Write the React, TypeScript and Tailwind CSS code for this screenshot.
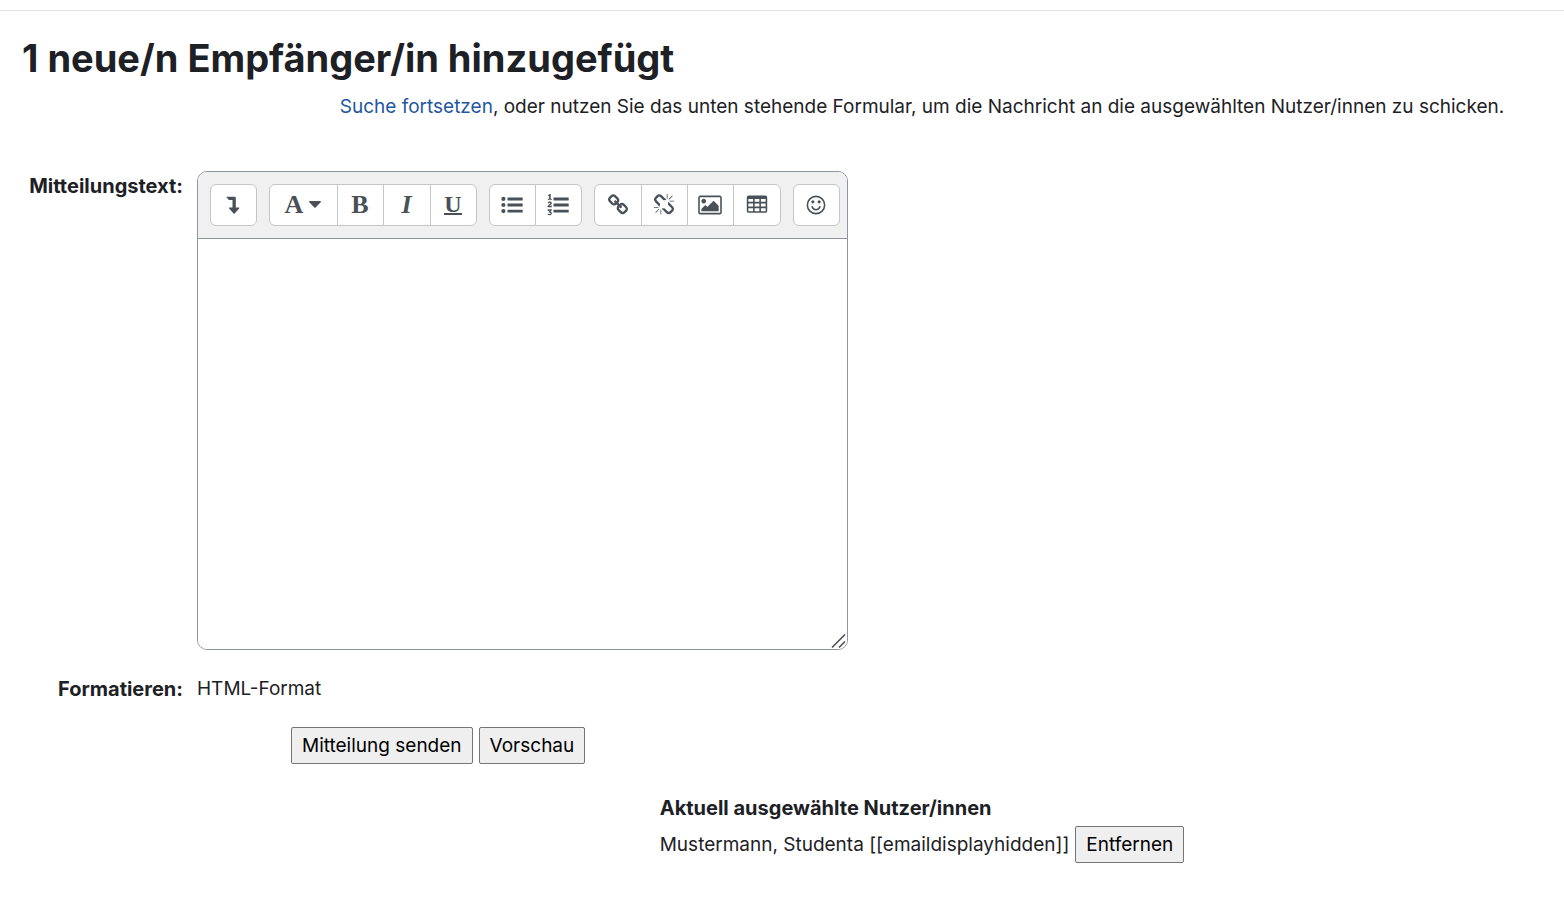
import React, { useState } from 'react';

const LevelDownIcon = () => <svg viewBox="0 0 22 22" className="h-[22px] w-[22px] fill-current" aria-hidden="true">
    <path d="M4.500 3.3c-.2-.3 0-.6.3-.6h8.100c.5 0 .9.4.9.9v9.900h2.900c.6 0 .8.5.5.9l-4.600 5c-.3.300-.7.300-1 0l-4.500-5c-.3-.4-.1-.9.5-.9h2.900V6H7.100a.6.6 0 0 1-.4-.2z" />
  </svg>;

const CaretIcon = () => <svg viewBox="0 0 12 7" className="h-[7px] w-3 fill-current" aria-hidden="true">
    <path d="M.8 0h10.400c.7 0 1 .8.5 1.300L6.600 6.600a.9.9 0 0 1-1.200 0L.3 1.300C-.2.8.1 0 .8 0z" />
  </svg>;

const ListIcon = () => <svg viewBox="0 0 22 22" className="h-[22px] w-[22px] fill-current" aria-hidden="true">
    <circle cx="2.4" cy="4.900" r="2.100" />
    <circle cx="2.4" cy="11" r="2.100" />
    <circle cx="2.4" cy="17.100" r="2.100" />
    <rect x="6.500" y="3.500" width="15.200" height="2.900" rx=".3" />
    <rect x="6.500" y="9.600" width="15.200" height="2.900" rx=".3" />
    <rect x="6.500" y="15.700" width="15.200" height="2.900" rx=".3" />
  </svg>;

const OrderedListIcon = () => <svg viewBox="0 0 22 22" className="h-[22px] w-[22px] overflow-visible fill-current" aria-hidden="true">
    <path d="M.8 1.200 2.700-.1h1v4.800h1.200v1H.8v-1h1.300V1.600l-.8.600z" />
    <path d="M.6 9.100C.9 8 1.700 7.500 2.800 7.500c1.200 0 2 .7 2 1.700 0 1.500-2.100 2-2.400 2.900h1.300v-.6h1.100v1.700H.6c-.4-2.600 2.700-2.900 2.700-4 0-.800-1.300-.7-1.600.4z" />
    <path d="M.8 15.200h4v1l-1.300 1.400c.8.200 1.300.8 1.300 1.600 0 1.300-1 2.100-2.300 2.100-.8 0-1.500-.3-2-.7l.6-1c.9.800 2.400.8 2.400-.300 0-.7-.6-.9-1.700-.8l-.3-.6 1.300-1.500H1.900v.5H.8z" />
    <rect x="6.500" y="3.500" width="15.200" height="2.900" rx=".3" />
    <rect x="6.500" y="9.600" width="15.200" height="2.900" rx=".3" />
    <rect x="6.500" y="15.700" width="15.200" height="2.900" rx=".3" />
  </svg>;

const LinkIcon = () => <svg viewBox="0 0 1792 1792" className="h-[22px] w-[22px] fill-current" aria-hidden="true">
    <path d="M1520 1216q0-40-28-68l-208-208q-28-28-68-28-42 0-72 32 3 3 19 18.500t21.500 21.500 15 19 13 25.500 3.500 27.500q0 40-28 68t-68 28q-15 0-27.500-3.500t-25.500-13-19-15-21.500-21.500-18.500-19q-33 31-33 73 0 40 28 68l206 207q27 27 68 27 40 0 68-26l147-146q28-28 28-67zm-703-705q0-40-28-68l-206-207q-28-28-68-28-39 0-68 27l-147 146q-28 28-28 67 0 40 28 68l208 208q27 27 68 27 42 0 72-31-3-3-19-18.500t-21.500-21.500-15-19-13-25.500-3.500-27.500q0-40 28-68t68-28q15 0 27.500 3.500t25.500 13 19 15 21.500 21.500 18.500 19q33-31 33-73zm895 705q0 120-85 203l-147 146q-83 83-203 83-121 0-204-85l-206-207q-83-83-83-203 0-123 88-209l-88-88q-86 88-208 88-120 0-204-84l-208-208q-84-84-84-204t85-203l147-146q83-83 203-83 121 0 204 85l206 207q83 83 83 203 0 123-88 209l88 88q86-88 208-88 120 0 204 84l208 208q84 84 84 204z" />
  </svg>;

const UnlinkIcon = () => <svg viewBox="0 0 1792 1792" className="h-[22px] w-[22px] fill-current" aria-hidden="true">
    <path d="M503 1271l-256 256q-10 9-23 9-12 0-23-9-9-10-9-23t9-23l256-256q10-9 23-9t23 9q9 10 9 23t-9 23zm169 41v320q0 14-9 23t-23 9-23-9-9-23v-320q0-14 9-23t23-9 23 9 9 23zm-224-224q0 14-9 23t-23 9h-320q-14 0-23-9t-9-23 9-23 23-9h320q14 0 23 9t9 23zm1264 128q0 120-85 203l-147 146q-83 83-203 83-121 0-204-85l-334-335q-21-21-42-56l239-18 273 274q28 28 68 27.500t68-27.500l147-146q28-28 28-67 0-40-28-68l-274-275 18-239q35 21 56 42l336 336q84 86 84 204zm-617-724l-239 18-273-274q-28-28-68-28-39 0-68 27l-147 146q-28 28-28 67 0 40 28 68l274 274-18 240q-35-21-56-42l-336-336q-84-86-84-204 0-120 85-203l147-146q83-83 203-83 121 0 204 85l334 335q21 21 42 56zm633 84q0 14-9 23t-23 9h-320q-14 0-23-9t-9-23 9-23 23-9h320q14 0 23 9t9 23zm-544-544v320q0 14-9 23t-23 9-23-9-9-23v-320q0-14 9-23t23-9 23 9 9 23zm407 151l-256 256q-11 9-23 9t-23-9q-9-10-9-23t9-23l256-256q10-9 23-9t23 9q9 10 9 23t-9 23z" />
  </svg>;

const ImageIcon = () => <svg viewBox="-64 0 1920 1792" className="h-[22px] w-6 fill-current" aria-hidden="true">
    <path d="M576 576q0 80-56 136t-136 56-136-56-56-136 56-136 136-56 136 56 56 136zm1024 384v448h-1408v-192l320-320 160 160 512-512zm96-704h-1600q-13 0-22.500 9.500t-9.500 22.500v1216q0 13 9.500 22.500t22.500 9.500h1600q13 0 22.500-9.500t9.500-22.500v-1216q0-13-9.500-22.500t-22.500-9.500zm160 32v1216q0 66-47 113t-113 47h-1600q-66 0-113-47t-47-113v-1216q0-66 47-113t113-47h1600q66 0 113 47t47 113z" />
  </svg>;

const TableIcon = () => <svg viewBox="0 0 1792 1792" className="h-[22px] w-[22px] fill-current" aria-hidden="true">
    <path fillRule="evenodd" d="M224 128h1344a160 160 0 0 1 160 160v1088a160 160 0 0 1-160 160H224a160 160 0 0 1-160-160V288a160 160 0 0 1 160-160zM192 416v224h384V416zM704 416v224h384V416zM1216 416v224h384V416zM192 768v256h384V768zM704 768v256h384V768zM1216 768v256h384V768zM192 1152v256h384v-256zM704 1152v256h384v-256zM1216 1152v256h384v-256z" />
  </svg>;

const SmileIcon = () => <svg viewBox="0 0 1792 1792" className="h-[22px] w-[22px] fill-current" aria-hidden="true">
    <circle cx="896" cy="896" r="704" fill="none" stroke="currentColor" strokeWidth="128" />
    <circle cx="640" cy="640" r="128" />
    <circle cx="1152" cy="640" r="128" />
    <path d="M580 1046a332 332 0 0 0 632 0" fill="none" stroke="currentColor" strokeWidth="128" strokeLinecap="round" />
  </svg>;

const toolbarGroups = [[
  { label: 'Mehr Symbole anzeigen', width: 'w-[47px]', icon: <LevelDownIcon /> }
], [
  { label: 'Absatzstile', width: 'w-[69px]', icon: <span className="flex items-center gap-[6px]"><b>A</b><CaretIcon /></span> },
  { label: 'Fett', width: 'w-[47px]', icon: <b>B</b> },
  { label: 'Kursiv', width: 'w-12', icon: <b className="italic">I</b> },
  { label: 'Unterstrichen', width: 'w-[47px]', icon: <b className="h-5 border-b-2 border-current text-2xl leading-[18px]">U</b> }
], [
  { label: 'Ungeordnete Liste', width: 'w-[47px]', icon: <ListIcon /> },
  { label: 'Geordnete Liste', width: 'w-[47px]', icon: <OrderedListIcon /> }
], [
  { label: 'Link', width: 'w-12', icon: <LinkIcon /> },
  { label: 'Link entfernen', width: 'w-[47px]', icon: <UnlinkIcon /> },
  { label: 'Bild', width: 'w-[47px]', icon: <ImageIcon /> },
  { label: 'Tabelle', width: 'w-12', icon: <TableIcon /> }
], [
  { label: 'Emoji', width: 'w-[47px]', icon: <SmileIcon /> }
]];

function Editor() {
  const [message, setMessage] = useState('');
  return <div className="relative w-[651px] overflow-hidden rounded-[10px] border border-[#8f959e]">
      <div className="flex gap-3 border-b border-[#8f959e] bg-[#f0f0f0] p-3">
        {toolbarGroups.map((group, index) => <div key={index} className="flex">
            {group.map(button => <button key={button.label} type="button" aria-label={button.label} className={`${button.width} flex h-[42px] items-center justify-center border border-[#c3c5c7] bg-white pr-px pb-px font-['Liberation_Serif',serif] text-[26px] leading-6 text-[#495057] not-first:-ml-px first:rounded-l-md last:rounded-r-md`}>
                {button.icon}
              </button>)}
          </div>)}
      </div>
      <textarea id="message" value={message} onChange={e => setMessage(e.target.value)} className="block h-[410px] w-full resize-none bg-white p-3 outline-none" />
      <svg viewBox="0 0 16 16" className="pointer-events-none absolute right-0 bottom-0 h-4 w-4" aria-hidden="true">
        <path d="M1 14.500 14 1.500M8 14.500l6-6" fill="none" stroke="#505050" strokeWidth="1.600" />
      </svg>
    </div>;
}

function PlainButton({ children, type = 'button' }: { children: React.ReactNode; type?: 'button' | 'submit' }) {
  return <button type={type} className="rounded-xs border border-[#767676] bg-[#efefef] px-[10px] py-[3px] leading-[29px] text-black">
      {children}
    </button>;
}

export default function App() {
  return <div className="bg-white pb-12 font-[Inter,sans-serif] text-[19px] leading-[30px] text-[#1d2125]">
      <header className="h-[11px] border-b border-[#dee2e6]" />
      <main className="px-[22px] pt-[23px]">
        <h1 className="text-[38px] leading-[48px] font-bold">
          1 neue/n Empfänger/in hinzugefügt
        </h1>
        <p className="mt-[10px] pl-[280px] text-center">
          <a href="#" className="text-[#1f57a0]">Suche fortsetzen</a>, oder nutzen Sie das unten stehende Formular, um die Nachricht an die ausgewählten Nutzer/innen zu schicken.
        </p>
        <form className="mt-[49px]" onSubmit={e => e.preventDefault()}>
          <div className="grid grid-cols-[161px_1fr] gap-x-[14px] gap-y-6">
            <label htmlFor="message" className="text-right text-xl leading-[30px] font-bold">Mitteilungstext:</label>
            <Editor />
            <span className="text-right text-xl leading-[30px] font-bold">Formatieren:</span>
            <span>HTML-Format</span>
          </div>
          <div className="mt-[23px] flex gap-[6px] pl-[269px]">
            <PlainButton type="submit">Mitteilung senden</PlainButton>
            <PlainButton>Vorschau</PlainButton>
          </div>
        </form>
        <section className="mt-[29px] flex justify-center pl-[280px]">
          <div>
            <h2 className="text-xl leading-[30px] font-bold">Aktuell ausgewählte Nutzer/innen</h2>
            <div className="mt-[3px] flex items-center gap-[6px]">
              <span>Mustermann, Studenta [[emaildisplayhidden]]</span>
              <PlainButton>Entfernen</PlainButton>
            </div>
          </div>
        </section>
      </main>
    </div>;
}
